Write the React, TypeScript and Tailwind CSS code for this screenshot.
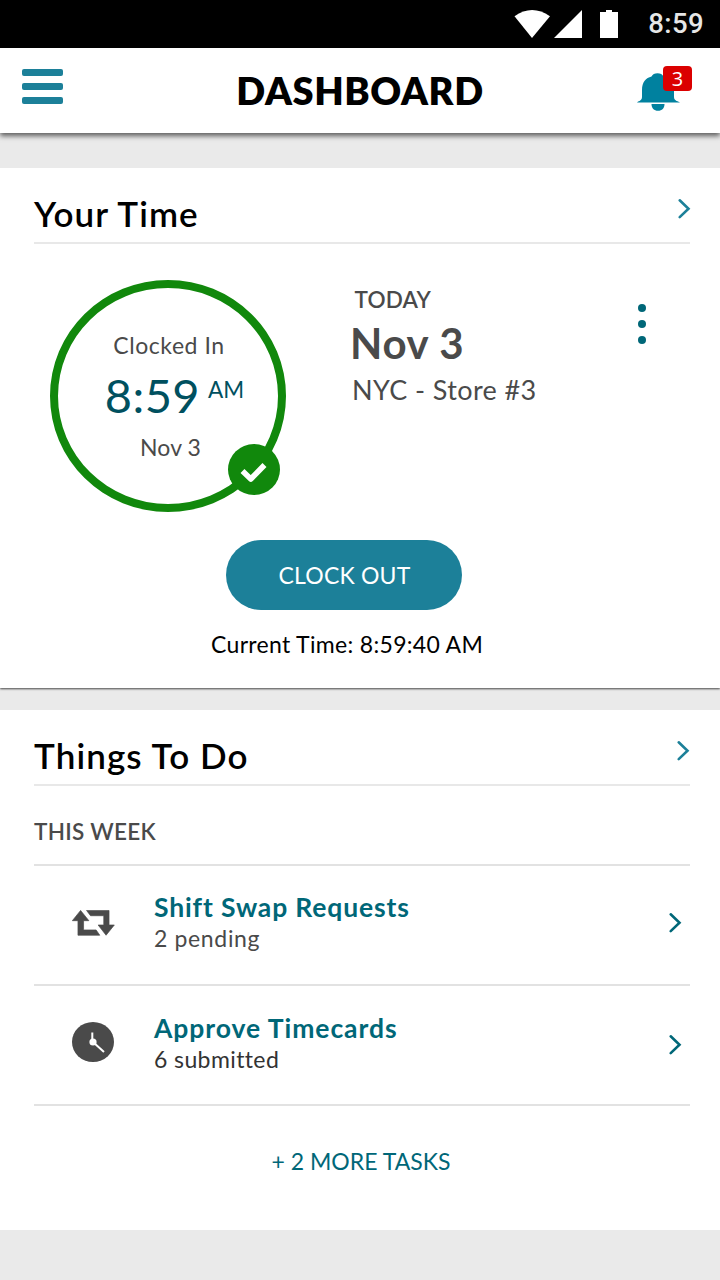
import type { ReactNode } from "react";

function Chevron({ className }: { className: string }) {
  return (
    <svg viewBox="0 0 14 22" fill="none" stroke="currentColor" strokeWidth="2.6" strokeLinecap="round" strokeLinejoin="miter" className={`h-[22px] w-[14px] shrink-0 ${className}`}>
      <path d="M2.700 2.300 L11.500 10.700 L2.700 19.100" />
    </svg>
  );
}

function StatusBar() {
  return (
    <div className="flex h-12 items-center bg-black pr-[16px] text-[#e6e6e6]">
      <svg viewBox="0 0 108 28" className="ml-auto h-[28px] w-[108px]" fill="#fff">
        <path d="M0.5 6.2 Q18 -6 36 6.2 L18 28 Z" />
        <path d="M40 28 L68 0 V28 Z" />
        <path d="M86 2 H92 V0 H98 V2 H104 V28 H86 Z" />
      </svg>
      <div className="ml-[26px] font-[Roboto] text-[27.5px] leading-[50px] font-medium tracking-[0.4px]">8:59</div>
    </div>
  );
}

function Header() {
  return (
    <header className="relative z-10 flex h-[85px] items-center justify-between bg-white pr-[28px] pl-[22px] shadow-[0_3px_5px_rgba(0,0,0,0.6)]">
      <div className="flex w-[56px] flex-col gap-[7px] pb-[8px]">
        <div className="h-[7px] w-[41px] rounded-[2px] bg-[#1c8099]" />
        <div className="h-[7px] w-[41px] rounded-[2px] bg-[#1c8099]" />
        <div className="h-[7px] w-[41px] rounded-[2px] bg-[#1c8099]" />
      </div>
      <h1 className="pl-[6px] text-[38px] leading-[85px] font-extrabold tracking-[0.6px]">DASHBOARD</h1>
      <div className="relative mb-[4px] h-[46px] w-[56px]">
        <svg viewBox="0 0 56 46" className="h-[46px] w-[56px]" fill="#00819f">
          <path d="M1.200 36.500 C1.200 35 6 35.500 6 31 V24 C6 16 10 12 15.500 10.500 C17 6 26 6 27.500 10.500 C34 12 38 16 38 24 V31 C38 35.500 43 35 43.800 36.500 Z" />
          <path d="M15.500 38 H28.500 C28.500 42 26 44.800 22 44.800 S15.500 42 15.500 38 Z" />
        </svg>
        <div className="absolute top-0 right-0 h-[25px] w-[29px] rounded-[4px] bg-[#db0000] text-center font-['Open_Sans'] text-[20px] leading-[26px] text-white">3</div>
      </div>
    </header>
  );
}

function SectionTitle({ children, shift }: { children: ReactNode; shift?: boolean }) {
  return (
    <div className="flex h-[76px] justify-between border-b-2 border-[#e8e8e8]">
      <h2 className="text-[35px] leading-[91px] font-semibold tracking-[1.1px]">{children}</h2>
      <Chevron className={shift ? "mt-[30px] text-[#1c8099]" : "mt-[30px] -mr-px text-[#1c8099]"} />
    </div>
  );
}

function TimeCard() {
  return (
    <section className="h-[520px] bg-white pr-[30px] pl-[34px] shadow-[0_1px_2px_rgba(0,0,0,0.7)] [clip-path:inset(0_0_-6px_0)]">
      <SectionTitle>Your Time</SectionTitle>
      <div className="flex pt-[36px] pl-[16px] text-[#4a4a4a]">
        <div className="relative flex h-[232px] w-[236px] shrink-0 flex-col items-center rounded-[50%] border-8 border-[#11880c] pt-[42px]">
          <div className="pl-[2px] text-[23px] leading-[30px] tracking-[0.55px]">Clocked In</div>
          <div className="flex pl-[13px] text-[#00505f]">
            <div className="text-[47px] leading-[70px] tracking-[0.4px]">8:59</div>
            <div className="ml-[8px] text-[22.5px] leading-[59px]">AM</div>
          </div>
          <div className="pl-[5px] text-[23px] leading-[34px] tracking-[0.1px]">Nov 3</div>
          <svg viewBox="0 0 52 51" className="absolute top-[156px] left-[170px] h-[51px] w-[52px]">
            <ellipse cx="26" cy="25.500" rx="26" ry="25.500" fill="#11880c" />
            <path d="M14.500 27 L22.800 35 L36.500 21" fill="none" stroke="#fff" strokeWidth="5.600" strokeLinejoin="round" />
          </svg>
        </div>
        <div className="ml-[65px] grow">
          <div className="pl-[3.5px] text-[22.5px] leading-[40px] font-semibold tracking-[0.2px]">TODAY</div>
          <div className="-ml-px text-[42px] leading-[46px] font-bold tracking-[0.7px]">Nov 3</div>
          <div className="pl-px text-[27px] leading-[48px] tracking-[0.4px]">NYC - Store #3</div>
        </div>
        <div className="mt-[24px] mr-[44px] flex flex-col gap-[8px]">
          <div className="size-[8px] rounded-full bg-[#006778]" />
          <div className="size-[8px] rounded-full bg-[#006778]" />
          <div className="size-[8px] rounded-full bg-[#006778]" />
        </div>
      </div>
      <button className="mt-[28px] ml-[192px] block h-[70px] w-[236px] rounded-full bg-[#1c8099] pl-px text-[23px] leading-[70px] tracking-[0.2px] text-white">CLOCK OUT</button>
      <div className="mt-[14px] ml-[177px] text-[23px] leading-[40px] tracking-[0.32px]">Current Time: 8:59:40 AM</div>
    </section>
  );
}

function SwapIcon() {
  return (
    <svg viewBox="0 0 130 78" className="h-[26px] w-[43px]" fill="#4a4a4a" stroke="#4a4a4a" strokeWidth="2" strokeLinejoin="round">
      <path d="M26 1 L51 32 H35 V60 H73 L84 76 H18 V32 H1 Z" />
      <path d="M44 1 H112 V45 H128 L103 76 L79 45 H96 V17 H56 Z" />
    </svg>
  );
}

function ClockIcon() {
  return (
    <svg viewBox="0 0 42 40" className="h-[40px] w-[42px]">
      <ellipse cx="21" cy="20" rx="21" ry="20" fill="#4a4a4a" />
      <circle cx="21" cy="20" r="3.600" fill="#fff" />
      <path d="M20.300 20 V10.500 M21 20 L32 30" stroke="#fff" strokeWidth="2" />
    </svg>
  );
}

function TaskList() {
  return (
    <section className="mt-[22px] h-[520px] bg-white pr-[30px] pl-[34px]">
      <SectionTitle shift>Things To Do</SectionTitle>
      <div className="h-[80px] border-b-2 border-[#e2e2e2] text-[22.5px] leading-[91px] font-semibold tracking-[0.3px] text-[#4a4a4a]">THIS WEEK</div>
      <div className="flex h-[120px] border-b-2 border-[#e2e2e2] pl-[38px]">
        <div className="w-[82px] pt-[44px]"><SwapIcon /></div>
        <div className="grow pt-[24px]">
          <div className="text-[26.5px] leading-[34px] font-bold tracking-[0.85px] text-[#006778]">Shift Swap Requests</div>
          <div className="text-[23px] leading-[29px] tracking-[0.65px] text-[#4a4a4a]">2 pending</div>
        </div>
        <Chevron className="mt-[46px] mr-[8px] text-[#006778]" />
      </div>
      <div className="flex h-[120px] border-b-2 border-[#e2e2e2] pl-[38px]">
        <div className="w-[82px] pt-[36px]"><ClockIcon /></div>
        <div className="grow pt-[25px]">
          <div className="text-[26.5px] leading-[34px] font-bold tracking-[0.95px] text-[#006778]">Approve Timecards</div>
          <div className="text-[23px] leading-[28px] tracking-[0.4px] text-[#333]">6 submitted</div>
        </div>
        <Chevron className="mt-[48px] mr-[8px] text-[#006778]" />
      </div>
      <div className="pr-[2px] text-center text-[23px] leading-[110px] text-[#006778]">+ 2 MORE TASKS</div>
    </section>
  );
}

export default function App() {
  return (
    <div className="h-[1280px] w-[720px] overflow-hidden bg-[#eaeaea] font-[Lato,sans-serif] whitespace-nowrap text-black">
      <StatusBar />
      <Header />
      <main className="pt-[35px]">
        <TimeCard />
        <TaskList />
      </main>
    </div>
  );
}
